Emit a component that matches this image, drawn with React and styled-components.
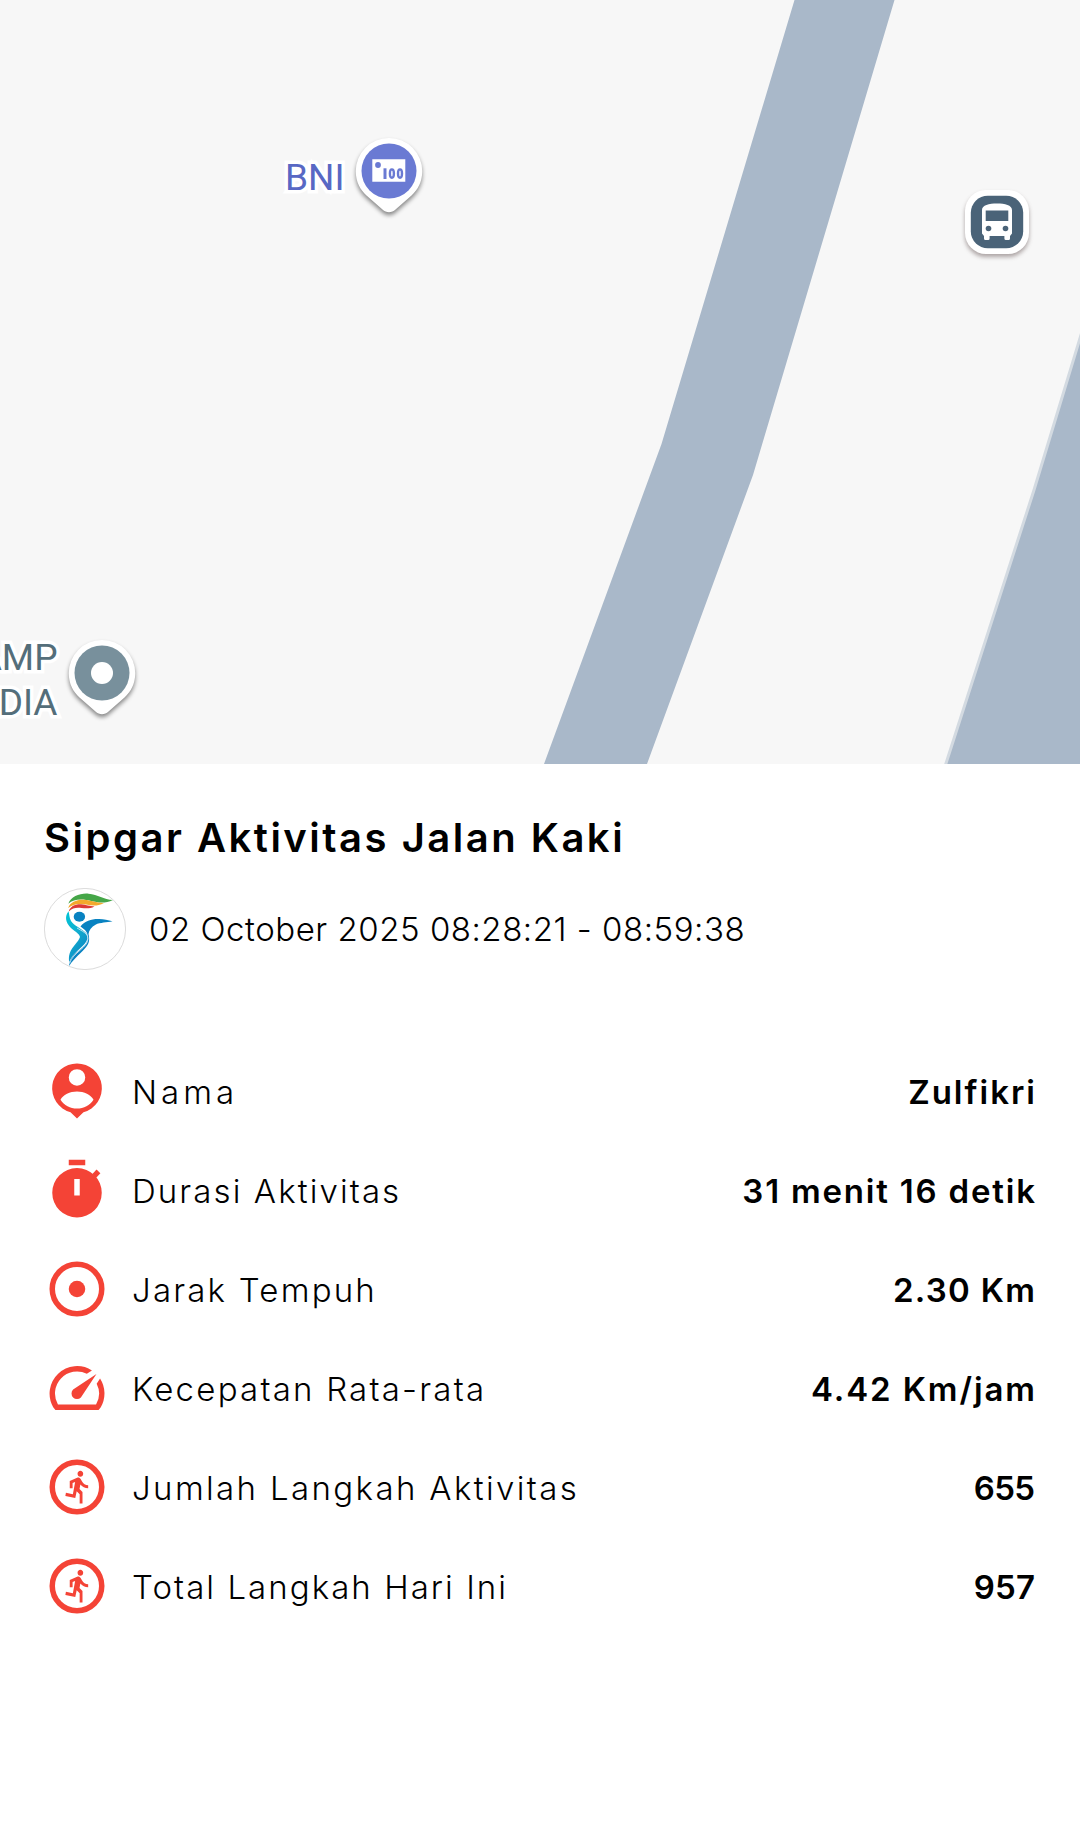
import React from 'react'
import styled, { createGlobalStyle } from 'styled-components'

const GlobalStyle = createGlobalStyle`
    * {
        box-sizing: border-box;
    }

    body {
        margin: 0;
        background: #ffffff;
        color: #000000;
        font-family: Inter, "Open Sans", sans-serif;
    }
`

const Screen = styled.main`
    width: 1080px;
    height: 1830px;
    overflow: hidden;
    background: #ffffff;
`

const Map = styled.section`
    position: relative;
    height: 764px;
    overflow: hidden;
    background: #f7f7f7;
`

const Roads = styled.svg`
    display: block;
    width: 1080px;
    height: 764px;
`

const Place = styled.div`
    position: absolute;
    top: ${props => props.$top}px;
    right: ${props => 1080 - props.$right}px;
    display: flex;
    align-items: flex-start;
    gap: ${props => props.$gap}px;
`

const PlaceName = styled.div`
    margin-top: ${props => props.$offset}px;
    color: ${props => props.$color};
    font-family: Roboto, sans-serif;
    font-size: 37px;
    line-height: 45px;
    text-align: right;
    white-space: pre;
    -webkit-text-stroke: 7px #ffffff;
    paint-order: stroke fill;
`

const PinIcon = styled.svg`
    display: block;
    width: 74px;
    height: 84px;
    overflow: visible;
    filter: drop-shadow(0 3px 2px rgba(0, 0, 0, 0.45));
`

const BusStop = styled.svg`
    position: absolute;
    top: 190px;
    left: 964.5px;
    width: 64px;
    height: 64px;
    overflow: visible;
    filter: drop-shadow(0 3px 2px rgba(60, 40, 40, 0.4));
`

const Details = styled.section`
    padding: 50px 45px 0 44px;
`

const Title = styled.h1`
    margin: 0;
    font-size: 40px;
    font-weight: 600;
    line-height: 48px;
    letter-spacing: 2.5px;
    white-space: nowrap;
`

const Session = styled.div`
    display: flex;
    align-items: center;
    gap: 23px;
    height: 82px;
    margin-top: 26px;
`

const Logo = styled.svg`
    width: 82px;
    height: 82px;
`

const DateText = styled.span`
    font-size: 33px;
    font-weight: 300;
    letter-spacing: 0.53px;
    white-space: nowrap;
`

const Stats = styled.ul`
    list-style: none;
    margin: 71px 0 0;
    padding: 0;
`

const StatRow = styled.li`
    display: flex;
    align-items: center;
    height: 99px;
`

const StatIcon = styled.svg`
    flex: none;
    width: 66px;
    height: 66px;
    margin-right: 22px;
    fill: #f44336;
`

const Label = styled.span`
    flex: 1;
    padding-top: 3px;
    font-size: 33px;
    font-weight: 300;
    letter-spacing: ${props => props.$spacing}px;
    white-space: nowrap;
`

const Value = styled.span`
    padding-top: 3px;
    margin-right: ${props => -props.$spacing}px;
    font-size: 33px;
    font-weight: 600;
    letter-spacing: ${props => props.$spacing}px;
    white-space: nowrap;
`

const RUNNER = 'M13.49 5.48c1.1 0 2-.9 2-2s-.9-2-2-2-2 .9-2 2 .9 2 2 2zm-3.6 13.9l1-4.4 2.1 2v6h2v-7.5l-2.1-2 .6-3c1.3 1.5 3.3 2.5 5.5 2.5v-2c-1.9 0-3.5-1-4.3-2.4l-1-1.6c-.4-.6-1-1-1.7-1-.3 0-.5.1-.8.1l-5.2 2.2v4.7h2v-3.4l1.8-.7-1.6 8.1-4.9-1-.4 2 7 1.4z'

const icons = {
    person: (
        <path
            fillRule="evenodd"
            d="M12 2a9 9 0 0 0-2.35 17.7L12 22l2.35-2.3A9 9 0 0 0 12 2zm0 2.05a3 3 0 1 1 0 6 3 3 0 0 1 0-6zM12 18.4c-2.5 0-4.7-1.2-6-3.2.8-1.8 3.5-3.05 6-3.05s5.2 1.25 6 3.05c-1.3 2-3.5 3.2-6 3.2z"
        />
    ),
    timer: (
        <>
            <path d="M9 1h6v2H9z" />
            <path d="M17.6 6.15l1.5-1.65 1.4 1.4-1.6 1.7z" />
            <path fillRule="evenodd" d="M12 4a9 9 0 1 0 0 18 9 9 0 0 0 0-18zm-1 4h2v6h-2z" />
        </>
    ),
    distance: (
        <>
            <circle cx="12" cy="12" r="9" fill="none" stroke="#f44336" strokeWidth="2" />
            <circle cx="12" cy="12" r="3" />
        </>
    ),
    speed: (
        <path d="M20.38 8.57l-1.23 1.85a8 8 0 0 1-.22 7.58H5.07A8 8 0 0 1 15.58 6.85l1.85-1.23A10 10 0 0 0 3.35 19l.8 1h15.7l.8-1a10 10 0 0 0-.27-10.44zM10.59 15.41a2 2 0 0 0 2.83 0l5.66-8.49-8.49 5.66a2 2 0 0 0 0 2.83z" />
    ),
    steps: (
        <>
            <circle cx="12" cy="12" r="9" fill="none" stroke="#f44336" strokeWidth="2" />
            <path d={RUNNER} transform="translate(6.28 5.25) scale(0.515 0.555)" />
        </>
    ),
}

const stats = [
    { icon: 'person', label: 'Nama', value: 'Zulfikri', labelSpacing: 4, valueSpacing: 2 },
    { icon: 'timer', label: 'Durasi Aktivitas', value: '31 menit 16 detik', labelSpacing: 2.1, valueSpacing: 1.8 },
    { icon: 'distance', label: 'Jarak Tempuh', value: '2.30 Km', labelSpacing: 2.2, valueSpacing: 1.3 },
    { icon: 'speed', label: 'Kecepatan Rata-rata', value: '4.42 Km/jam', labelSpacing: 2.22, valueSpacing: 1.9 },
    { icon: 'steps', label: 'Jumlah Langkah Aktivitas', value: '655', labelSpacing: 2.37, valueSpacing: -0.7 },
    { icon: 'steps', label: 'Total Langkah Hari Ini', value: '957', labelSpacing: 2.05, valueSpacing: 0.2 },
]

function Pin({ color, children }) {
    return (
        <PinIcon viewBox="0 0 74 84">
            <path
                fill="#ffffff"
                d="M37 4a33.2 33.2 0 0 0-33.2 33.2c0 11 4.500 18.3 10.7 24.3L30.5 75.500c3.800 3.500 9.200 3.500 13 0L59.500 61.500c6.200-6 10.700-13.300 10.700-24.300A33.200 33.200 0 0 0 37 4z"
            />
            <circle cx="37" cy="37" r="27.5" fill={color} />
            {children}
        </PinIcon>
    )
}

function SipgarLogo() {
    return (
        <Logo viewBox="0 0 82 82">
            <defs>
                <linearGradient id="body" x1="0" y1="0" x2="0.6" y2="1">
                    <stop offset="0" stopColor="#00c4d6" />
                    <stop offset="0.5" stopColor="#12afd0" />
                    <stop offset="1" stopColor="#0a86c2" />
                </linearGradient>
            </defs>
            <circle cx="41" cy="41" r="40.6" fill="#ffffff" stroke="#cccccc" strokeWidth="0.7" />
            <path fill="#45a648" d="M24.3 15.8C27 8.500 36 5 44.500 5.700c9.500.8 15 5.800 24.500 6.300-8 3.800-15 2.600-22 1C39 11 30 10.600 24.300 15.800z" />
            <path fill="#f3a92c" d="M24.200 20c1.800-6 8.800-8.600 15.800-8.200 8 .4 12 3.400 20 3.200-7 3.600-12 2.600-18 1.500-7-1.300-13-.6-17.800 3.500z" />
            <path fill="#dc3a36" d="M24.800 23.500c1-5 6.200-7.500 12.200-7.300 5 .1 8.500 2.200 13.500 2.200-4.500 2.400-8.500 2.200-13 1.500-5-.7-9-.2-12.700 3.600z" />
            <path fill="url(#body)" d="M24.500 23.300c-4 5-2.800 11 1.500 15.600 4 4.300 9 6 10 10-1.500 5-8 9.500-10.200 16-1.200 3.600-1 6.500-.6 9C29 65 38 60 42.300 53.500c2-3.500 1.700-6.500-.3-8.500C37 40 29.500 37.500 27 33c-1.800-3.500-1.500-6.500-2.500-9.700z" />
            <path fill="#0882c1" d="M36.500 38.500C41 33 48 30.800 55 31.100c5 .2 9 1.200 13.500 2.200-6 1.600-12 .9-17 3.400-4 2-6.500 5.300-7 9.300 1 5 1.200 8.500-2 12.500C38 64.500 30 70 25.200 78c-.3-3.500 1.300-7 4-10.300 4.500-5 12-8.500 14-14.700 1.500-4.500.3-8-2.200-11z" />
            <path fill="none" stroke="#ffffff" strokeWidth="0.7" d="M33 40c5 3 11 5.500 11 10.500C44 60 29 64 25.500 75.500" />
            <ellipse cx="35.4" cy="28.700" rx="5.700" ry="5" fill="#0882c1" />
        </Logo>
    )
}

function ActivityMap() {
    return (
        <Map>
            <Roads viewBox="0 0 1080 764">
                <path fill="#a9b8c9" d="M794.5 0H894.5L753 475 647 764H544L661.500 444z" />
                <path fill="#a9b8c9" stroke="#d3dae1" strokeWidth="3" d="M1084 325L1034 490 944.500 768H1084z" />
            </Roads>
            <Place $top={134} $right={426} $gap={7.5}>
                <PlaceName $color="#5868c4" $offset={21}>BNI</PlaceName>
                <Pin color="#6a7ad3">
                    <path fill="#ffffff" d="M20.300 25.300h33v22.500h-33z" />
                    <circle cx="26" cy="31" r="2.900" fill="#6a7ad3" />
                    <path fill="#6a7ad3" d="M31.500 34.300h3V45h-3z" />
                    <ellipse cx="39.900" cy="39.600" rx="2" ry="4.200" fill="none" stroke="#6a7ad3" strokeWidth="2.400" />
                    <ellipse cx="48" cy="39.600" rx="2" ry="4.200" fill="none" stroke="#6a7ad3" strokeWidth="2.400" />
                </Pin>
            </Place>
            <Place $top={636} $right={138.5} $gap={7}>
                <PlaceName $color="#546e7a" $offset={-1}>{'CAMP\nMEDIA'}</PlaceName>
                <Pin color="#78909c">
                    <circle cx="37" cy="37" r="11" fill="#ffffff" />
                </Pin>
            </Place>
            <BusStop viewBox="0 0 64 64">
                <rect width="64" height="64" rx="21" fill="#ffffff" />
                <rect x="5.800" y="5.800" width="52.400" height="52.400" rx="17" fill="#4a6378" />
                <path
                    fill="#ffffff"
                    d="M17 20c0-5 7-6.500 15-6.500s15 1.500 15 6.500v23.500l-2 2.500v2.500a1.500 1.500 0 0 1-1.500 1.500h-2.600a1.500 1.500 0 0 1-1.500-1.500V46H24.600v2.500a1.500 1.500 0 0 1-1.500 1.500h-2.600a1.500 1.500 0 0 1-1.500-1.500V46l-2-2.500z"
                />
                <path fill="#4a6378" d="M20.700 20.500h22.600V31H20.700z" />
                <circle cx="23.500" cy="38.500" r="2.800" fill="#4a6378" />
                <circle cx="40.500" cy="38.500" r="2.800" fill="#4a6378" />
            </BusStop>
        </Map>
    )
}

function Stat({ stat }) {
    return (
        <StatRow>
            <StatIcon viewBox="0 0 24 24">{icons[stat.icon]}</StatIcon>
            <Label $spacing={stat.labelSpacing}>{stat.label}</Label>
            <Value $spacing={stat.valueSpacing}>{stat.value}</Value>
        </StatRow>
    )
}

function App() {
    return (
        <Screen>
            <GlobalStyle />
            <ActivityMap />
            <Details>
                <Title>Sipgar Aktivitas Jalan Kaki</Title>
                <Session>
                    <SipgarLogo />
                    <DateText>02 October 2025 08:28:21 - 08:59:38</DateText>
                </Session>
                <Stats>
                    {stats.map(stat => <Stat key={stat.label} stat={stat} />)}
                </Stats>
            </Details>
        </Screen>
    )
}

export default App
